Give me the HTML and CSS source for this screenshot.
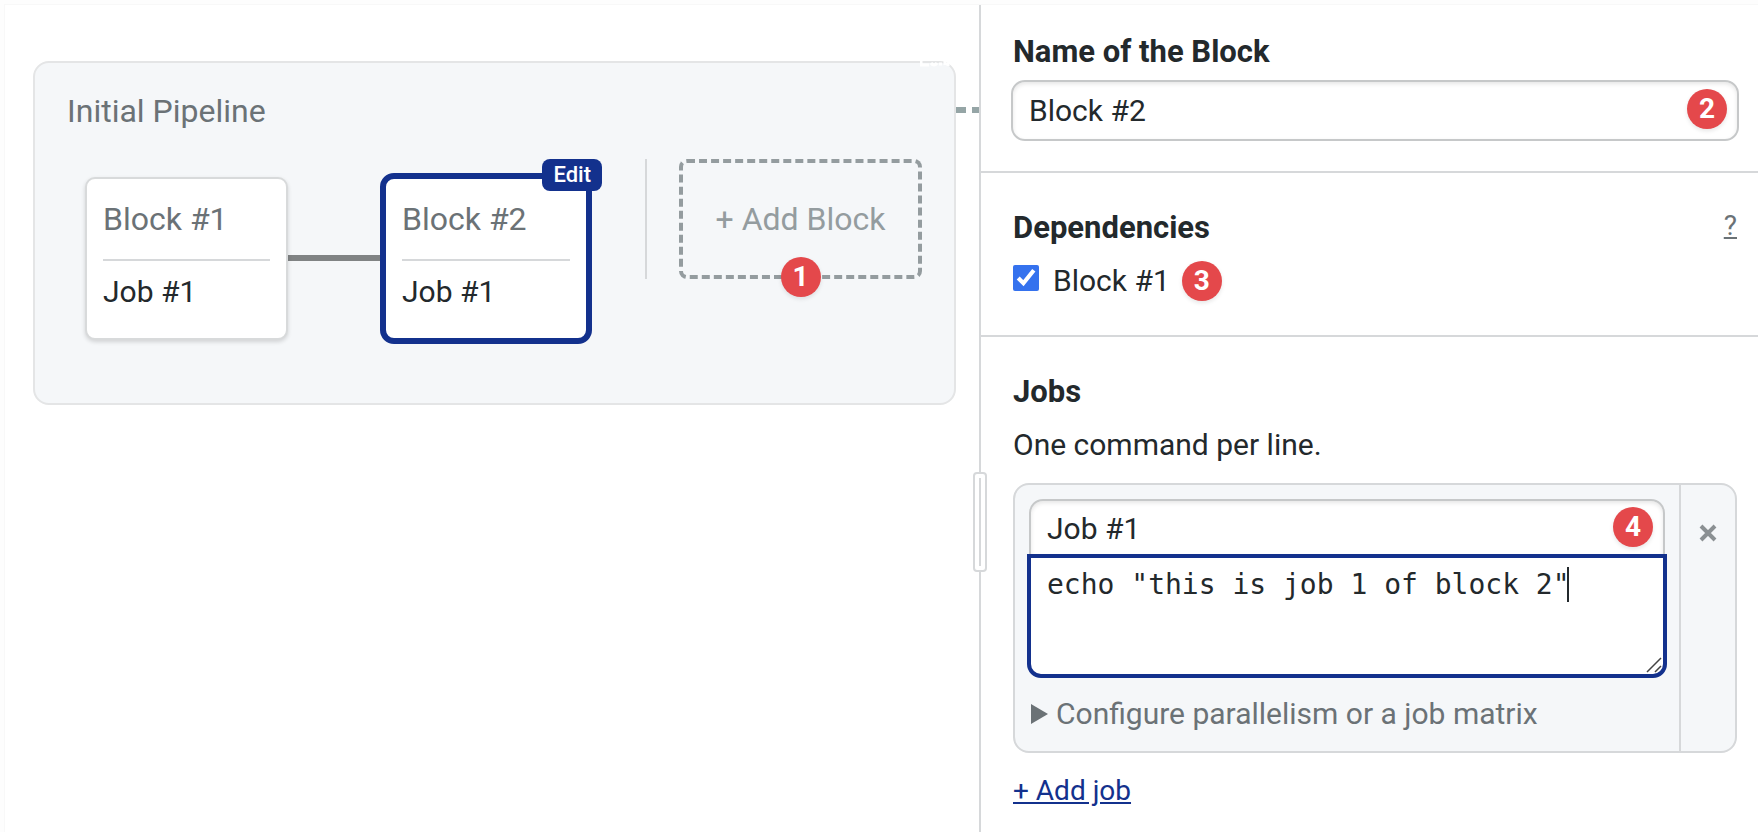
FILE: index.html
```html
<!DOCTYPE html>
<html lang="en">
<head>
    <meta charset="UTF-8">
    <meta name="viewport" content="width=device-width, initial-scale=1.0">
    <title>Workflow Editor</title>
    <link rel="stylesheet" href="styles.css">
</head>
<body>
    <div class="editor">
        <main class="canvas">
            <section class="pipeline">
                <svg class="corner-mark" width="30" height="6" viewBox="0 0 30 6"><path d="M1 0V4H9M11 2Q14 6 17 2M19 3H22M25 0V4M28 2V5" stroke="#fff" stroke-width="3" fill="none"/></svg>
                <h2 class="pipeline-name">Initial Pipeline</h2>
                <div class="pipeline-row">
                    <div class="block">
                        <h3 class="block-name">Block #1</h3>
                        <p class="block-job">Job #1</p>
                    </div>
                    <div class="connection"></div>
                    <div class="block block-selected">
                        <span class="edit-label">Edit</span>
                        <h3 class="block-name">Block #2</h3>
                        <p class="block-job">Job #1</p>
                    </div>
                    <div class="add-area">
                        <button type="button" class="add-block">+ Add Block<span class="step step-bottom">1</span></button>
                    </div>
                </div>
            </section>
            <div class="promotion-line"></div>
        </main>

        <aside class="sidebar">
            <div class="resizer"></div>

            <section class="panel">
                <label class="panel-title" for="block-name">Name of the Block</label>
                <div class="field">
                    <input type="text" class="text-input" id="block-name" value="Block #2">
                    <span class="step step-right">2</span>
                </div>
            </section>

            <section class="panel panel-deps">
                <div class="panel-head">
                    <h3 class="panel-title">Dependencies</h3>
                    <a href="#" class="help">?</a>
                </div>
                <div class="dependency">
                    <input type="checkbox" class="checkbox" id="dep-1" checked>
                    <label for="dep-1">Block #1</label>
                    <span class="step">3</span>
                </div>
            </section>

            <section class="panel panel-jobs">
                <h3 class="panel-title">Jobs</h3>
                <p class="hint">One command per line.</p>
                <div class="job">
                    <div class="job-main">
                        <div class="field">
                            <input type="text" class="text-input job-name" aria-label="Job name" value="Job #1">
                            <span class="step step-right">4</span>
                        </div>
                        <div class="commands-wrap">
                            <textarea class="commands" aria-label="Commands" spellcheck="false">echo "this is job 1 of block 2"</textarea>
                            <span class="caret"></span>
                            <svg class="grip" width="16" height="16" viewBox="0 0 16 16"><path d="M1 15L15 1M9 15L15 9" stroke="#444" stroke-width="1.5" fill="none"/></svg>
                        </div>
                        <button type="button" class="matrix-toggle">
                            <svg width="17" height="20" viewBox="0 0 17 20"><path d="M0 0L17 10L0 20Z" fill="currentColor"/></svg>
                            Configure parallelism or a job matrix
                        </button>
                    </div>
                    <button type="button" class="job-remove" aria-label="Remove job">
                        <svg width="18" height="18" viewBox="0 0 18 18"><path d="M2 2L16 16M16 2L2 16" stroke="currentColor" stroke-width="4" fill="none"/></svg>
                    </button>
                </div>
                <a href="#" class="add-job">+ Add job</a>
            </section>
        </aside>
    </div>
</body>
</html>
```

FILE: styles.css
```css
* {
    box-sizing: border-box;
}

body {
    margin: 0;
    padding: 4px 0 0 4px;
    font-family: Roboto, 'Liberation Sans', sans-serif;
    font-size: 30px;
    line-height: 36px;
    color: #23292c;
    background-color: #fdfdfd;
}

h2, h3, p {
    margin: 0;
}

button, input, textarea {
    font: inherit;
    color: inherit;
}

.editor {
    display: flex;
    min-height: calc(100vh - 4px);
    background-color: #fff;
    border-top: 1px solid #f8f8f8;
    border-left: 1px solid #f8f8f8;
}

/* Canvas */

.canvas {
    flex: 1;
    display: flex;
    align-items: flex-start;
    padding: 56px 0 0 28px;
}

.pipeline {
    position: relative;
    flex: 1;
    padding: 28px 32px 59px;
    border: 2px solid #e4e5e6;
    border-radius: 16px;
    background-color: #f5f7f9;
}

.corner-mark {
    position: absolute;
    top: -2px;
    right: 4px;
}

.pipeline-name {
    font-size: 32px;
    line-height: 40px;
    font-weight: 400;
    color: #6b7276;
}

.pipeline-row {
    display: flex;
    align-items: flex-start;
    padding: 28px 0 0 18px;
}

.block {
    position: relative;
    width: 203px;
    height: 163px;
    margin-top: 18px;
    padding: 16px;
    border: 2px solid #d8dadb;
    border-radius: 10px;
    background-color: #fff;
    box-shadow: 0 2px 4px rgba(0, 0, 0, 0.15);
}

.block-name {
    height: 66px;
    padding-top: 4px;
    border-bottom: 2px solid #d6d8da;
    font-size: 32px;
    line-height: 40px;
    font-weight: 400;
    color: #6b7276;
}

.block-job {
    padding-top: 13px;
}

.block-selected {
    width: 212px;
    height: 171px;
    margin-top: 14px;
    border: 6px solid #13318d;
    border-radius: 14px;
    box-shadow: none;
}

.edit-label {
    position: absolute;
    top: -20px;
    right: -16px;
    padding: 0 11px;
    border-radius: 8px;
    background-color: #13318d;
    color: #fff;
    font-size: 22px;
    font-weight: 500;
    line-height: 32px;
}

.connection {
    width: 92px;
    height: 6px;
    margin-top: 96px;
    background-color: #808384;
}

.add-area {
    flex: 1;
    margin-left: 53px;
    padding-left: 32px;
    border-left: 2px solid #d6d8da;
}

.add-block {
    position: relative;
    display: block;
    width: 100%;
    height: 120px;
    padding: 0;
    border: 4px dashed #949c9f;
    border-radius: 8px;
    background: none;
    font-size: 32px;
    color: #949c9f;
    white-space: nowrap;
}

.promotion-line {
    width: 23px;
    height: 6px;
    margin-top: 46px;
    background: repeating-linear-gradient(to right, #95a5a6 0 10px, transparent 10px 16px);
}

/* Numbered markers */

.step {
    width: 40px;
    height: 40px;
    border-radius: 50%;
    background-color: #e4484b;
    box-shadow: 0 2px 4px rgba(0, 0, 0, 0.1);
    color: #fff;
    font-size: 28px;
    font-weight: 700;
    line-height: 40px;
    text-align: center;
}

.step-bottom {
    position: absolute;
    left: calc(50% - 20px);
    bottom: -22px;
}

.step-right {
    position: absolute;
    top: 9px;
    right: 12px;
}

/* Sidebar */

.sidebar {
    position: relative;
    width: 779px;
    border-left: 2px solid #d6d8da;
}

.resizer {
    position: absolute;
    top: 467px;
    left: -8px;
    width: 14px;
    height: 100px;
    padding: 4px;
    border: 2px solid #d6d8da;
    border-radius: 4px;
    background: #fff linear-gradient(#d6d8da, #d6d8da) center / 2px 88px no-repeat;
}

.panel {
    padding: 29px 19px 30px 32px;
    border-bottom: 2px solid #d6d8da;
}

.panel-title {
    display: block;
    font-size: 31px;
    line-height: 36px;
    font-weight: 700;
}

.field {
    position: relative;
}

.text-input {
    display: block;
    width: 100%;
    height: 61px;
    padding: 0 16px;
    border: 2px solid #c6c8c9;
    border-radius: 14px;
    background-color: #fff;
    box-shadow: inset 0 2px 4px rgba(0, 0, 0, 0.1);
    outline: none;
}

.panel > .field {
    margin: 10px 0 0 -2px;
}

.panel-deps {
    padding-top: 37px;
    padding-bottom: 34px;
}

.panel-head {
    display: flex;
    justify-content: space-between;
}

.help {
    margin-right: 2px;
    color: #6b7276;
    font-size: 28px;
    line-height: 32px;
}

.dependency {
    display: flex;
    align-items: center;
    gap: 12px;
    margin-top: 15px;
}

.checkbox {
    width: 26px;
    height: 26px;
    margin: 0 2px 6px 0;
    accent-color: #3572ee;
}

.panel-jobs {
    padding-top: 37px;
    border-bottom: 0;
}

.hint {
    margin-top: 17px;
}

.job {
    display: flex;
    margin: 20px 2px 0 0;
    border: 2px solid #d6d8da;
    border-radius: 16px;
    background-color: #f5f7f9;
}

.job-main {
    flex: 1;
    padding: 14px 14px 19px;
}

.job-name {
    height: 58px;
    border-radius: 14px 14px 0 0;
}

.job-main .step-right {
    top: 8px;
}

.commands-wrap {
    position: relative;
    margin: -3px -2px 0;
}

.commands {
    display: block;
    width: 100%;
    height: 124px;
    padding: 10px 16px;
    border: 4px solid #13318d;
    border-radius: 0 0 14px 14px;
    background-color: #fff;
    font-family: 'DejaVu Sans Mono', monospace;
    font-size: 28px;
    line-height: 34px;
    outline: none;
    resize: none;
}

.caret {
    position: absolute;
    top: 13px;
    left: 540px;
    width: 2px;
    height: 35px;
    background-color: #23292c;
}

.grip {
    position: absolute;
    right: 5px;
    bottom: 5px;
}

.matrix-toggle {
    display: flex;
    align-items: center;
    gap: 8px;
    margin-top: 18px;
    padding: 0 2px;
    border: 0;
    background: none;
    color: #6b7276;
}

.job-remove {
    display: flex;
    justify-content: center;
    width: 56px;
    padding: 39px 0 0;
    border: 0;
    border-left: 2px solid #d6d8da;
    background: none;
    color: #8b9093;
}

.add-job {
    display: inline-block;
    margin-top: 20px;
    color: #13318d;
    font-size: 28px;
}
```
